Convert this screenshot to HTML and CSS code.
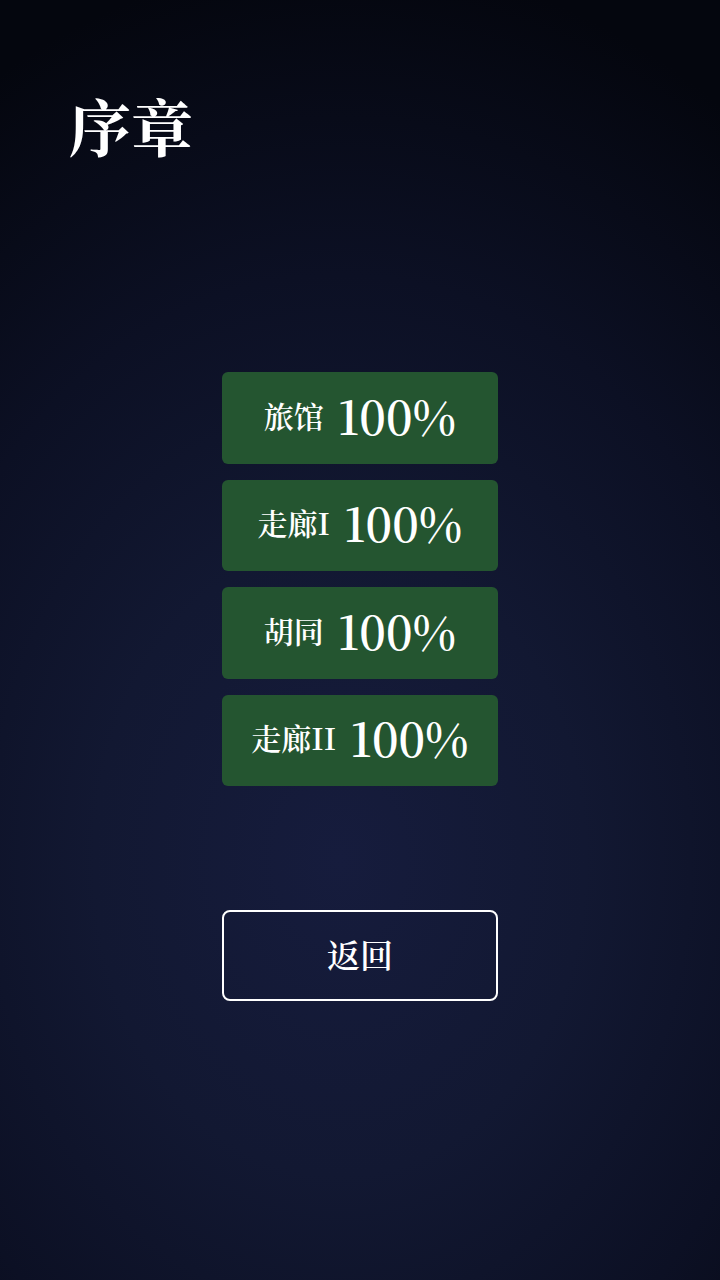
FILE: index.html
```html
<!DOCTYPE html>
<html lang="zh">
<head>
<meta charset="utf-8">
<link rel="stylesheet" href="styles.css">
</head>
<body>
<div class="screen">
  <h1 class="title">序章</h1>
  <div class="levels">
    <div class="level"><span class="name">旅馆</span><span class="pct">100%</span></div>
    <div class="level"><span class="name">走廊I</span><span class="pct">100%</span></div>
    <div class="level"><span class="name">胡同</span><span class="pct">100%</span></div>
    <div class="level"><span class="name">走廊II</span><span class="pct">100%</span></div>
  </div>
  <div class="back">返回</div>
</div>
</body>
</html>
```
FILE: styles.css
```css
html, body {
  margin: 0;
  padding: 0;
}
body {
  width: 720px;
  height: 1280px;
  overflow: hidden;
  background: radial-gradient(ellipse 700px 900px at 340px 860px, #161c3d 0%, #121832 35%, #0c1024 65%, #04060e 100%);
  background-color: #04060e;
  font-family: "Noto Serif CJK SC", "Liberation Serif", "Noto Sans CJK SC", serif;
  color: #ffffff;
}
.screen {
  display: flex;
  flex-direction: column;
  align-items: center;
  height: 1280px;
}
.title {
  align-self: flex-start;
  margin: 86px 0 0 69px;
  font-size: 62px;
  line-height: 80px;
  font-weight: 700;
}
.levels {
  margin-top: 206px;
  display: flex;
  flex-direction: column;
  gap: 16px;
}
.level {
  box-sizing: border-box;
  width: 276px;
  height: 91.5px;
  padding-bottom: 6px;
  border-radius: 6px;
  background: #245530;
  display: flex;
  align-items: center;
  justify-content: center;
  gap: 14px;
}
.name {
  font-size: 30px;
  font-weight: 600;
}
.pct {
  font-size: 46px;
  font-weight: 600;
}
.back {
  box-sizing: border-box;
  margin-top: 124px;
  width: 276px;
  height: 91px;
  padding-bottom: 5px;
  border: 2px solid #ffffff;
  border-radius: 8px;
  display: flex;
  align-items: center;
  justify-content: center;
  font-size: 33px;
  font-weight: 600;
}
```
